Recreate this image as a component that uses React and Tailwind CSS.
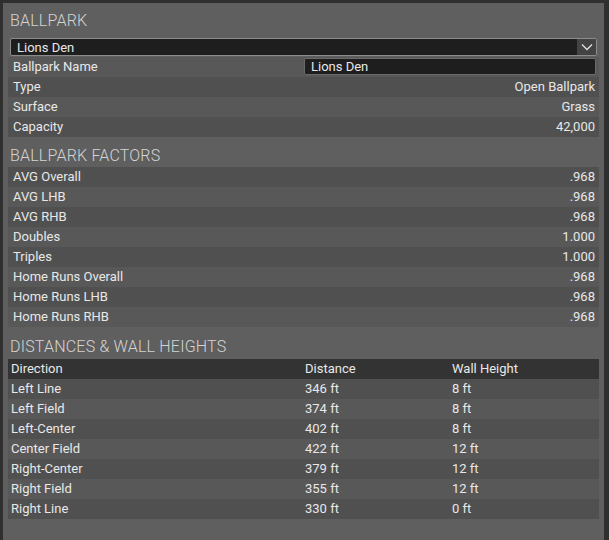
import React from "react";

const info = [
  ["Type", "Open Ballpark"],
  ["Surface", "Grass"],
  ["Capacity", "42,000"],
];

const factors = [
  ["AVG Overall", ".968"],
  ["AVG LHB", ".968"],
  ["AVG RHB", ".968"],
  ["Doubles", "1.000"],
  ["Triples", "1.000"],
  ["Home Runs Overall", ".968"],
  ["Home Runs LHB", ".968"],
  ["Home Runs RHB", ".968"],
];

const distances = [
  ["Left Line", "346 ft", "8 ft"],
  ["Left Field", "374 ft", "8 ft"],
  ["Left-Center", "402 ft", "8 ft"],
  ["Center Field", "422 ft", "12 ft"],
  ["Right-Center", "379 ft", "12 ft"],
  ["Right Field", "355 ft", "12 ft"],
  ["Right Line", "330 ft", "0 ft"],
];

const Title = ({ children, className }) => (
  <div
    className={
      "h-[20px] leading-[20px] pl-[2px] text-[16px] font-light text-[#d4d4d4] tracking-[0.2px] " +
      className
    }
  >
    {children}
  </div>
);

const Row = ({ label, value, dark }) => (
  <div
    className={
      "flex h-[20px] items-center justify-between pl-[5px] pr-[4px] " +
      (dark ? "bg-[#505050]" : "bg-[#585858]")
    }
  >
    <span>{label}</span>
    <span>{value}</span>
  </div>
);

export default function App() {
  return (
    <div
      className="w-[609px] h-[540px] bg-[#2f2f2f] pt-[3px] pl-[3px] pr-[5px] overflow-hidden text-[13px] text-[#e8e8e8]"
      style={{ fontFamily: "Roboto, 'Liberation Sans', sans-serif" }}
    >
      <div className="h-full bg-[#5f5f5f] px-[5px] pt-[8px]">
        <Title>BALLPARK</Title>

        <div className="mt-[7px] mb-[1px] mx-[2px] h-[18px] flex items-stretch rounded-[2px] border border-[#8c8c8c] bg-[#1e1e1e]">
          <div className="flex-1 flex items-center pl-[6px] leading-none">Lions Den</div>
          <div className="w-[19px] flex items-center justify-center bg-[#434343]">
            <svg width="12" height="8" viewBox="0 0 12 8" fill="none">
              <polyline
                points="1,1.5 6,6.5 11,1.5"
                stroke="#e0e0e0"
                strokeWidth="1.3"
              />
            </svg>
          </div>
        </div>

        <div className="flex h-[20px] items-center bg-[#585858] pl-[5px] pr-[3px]">
          <span className="w-[291px]">Ballpark Name</span>
          <div className="flex-1 h-[17px] mb-[1px] flex items-center pl-[6px] rounded-[2px] border border-[#6a6a6a] bg-[#1e1e1e] leading-none">
            Lions Den
          </div>
        </div>
        {info.map(([l, v], i) => (
          <Row key={l} label={l} value={v} dark={i % 2 === 0} />
        ))}

        <Title className="mt-[9px] mb-[1px]">BALLPARK FACTORS</Title>
        {factors.map(([l, v], i) => (
          <Row key={l} label={l} value={v} dark={i % 2 === 0} />
        ))}

        <Title className="mt-[10px] mb-[2px]">DISTANCES &amp; WALL HEIGHTS</Title>
        <div className="grid grid-cols-[294px_147px_1fr] h-[20px] items-center bg-[#333333] pl-[3px]">
          <span>Direction</span>
          <span>Distance</span>
          <span>Wall Height</span>
        </div>
        {distances.map(([d, dist, wall], i) => (
          <div
            key={d}
            className={
              "grid grid-cols-[294px_147px_1fr] h-[20px] items-center pl-[3px] " +
              (i % 2 === 0 ? "bg-[#505050]" : "bg-[#585858]")
            }
          >
            <span>{d}</span>
            <span>{dist}</span>
            <span>{wall}</span>
          </div>
        ))}
      </div>
    </div>
  );
}
